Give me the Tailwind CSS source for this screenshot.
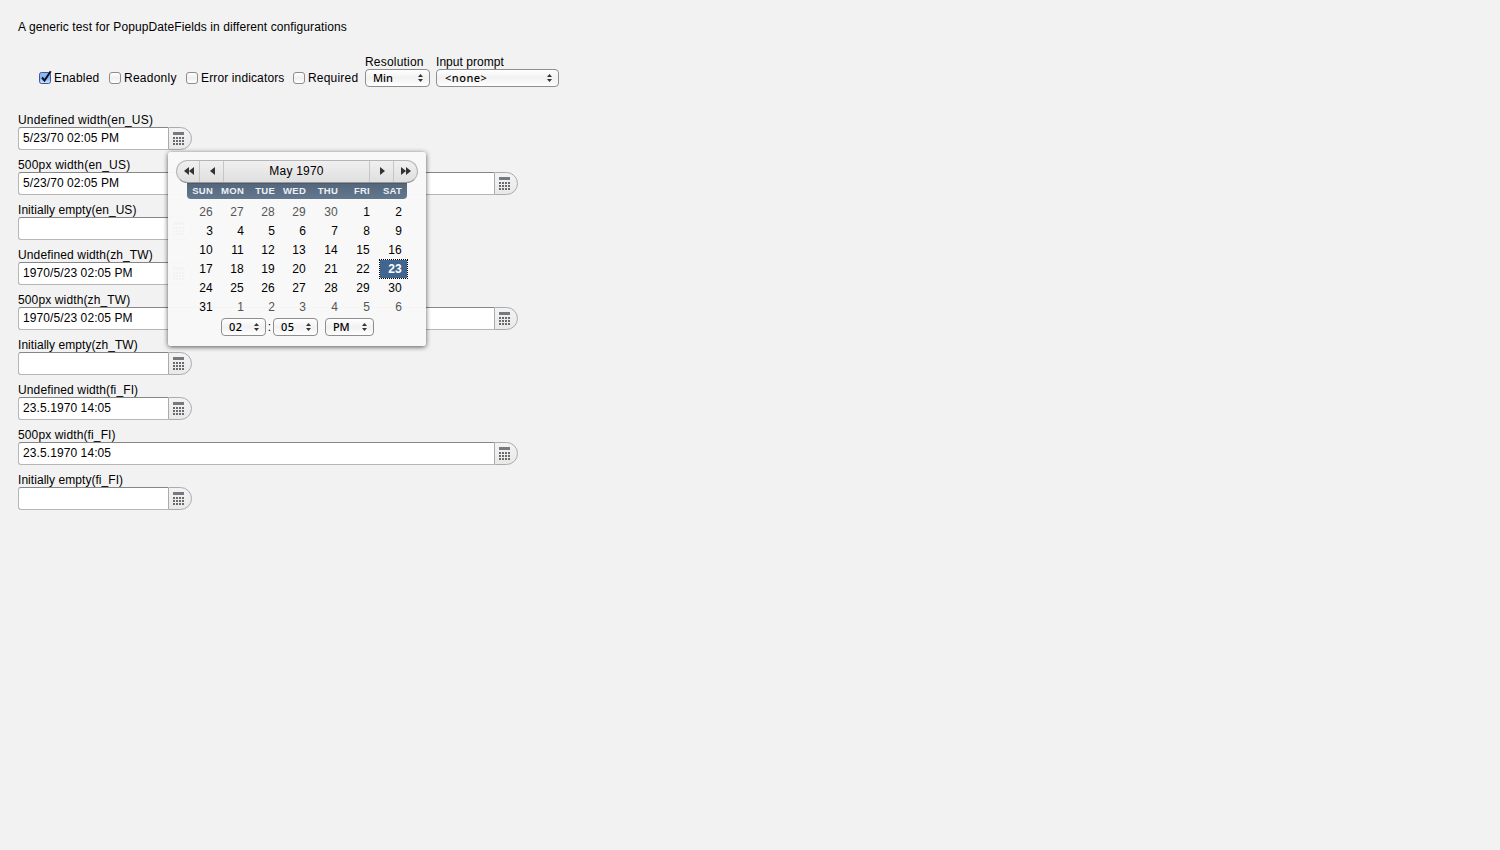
<!DOCTYPE html>
<html lang="en">
<head>
<meta charset="utf-8">
<title>PopupDateFields</title>
<script src="https://cdn.jsdelivr.net/npm/@tailwindcss/browser@4"></script>
</head>
<body class="bg-[#f2f2f2] h-[850px] overflow-hidden text-black text-[12px] leading-[15px] font-['Liberation_Sans',Arial,sans-serif]">
<svg class="hidden">
  <symbol id="cal" viewBox="0 0 11 13"><path fill="#747a80" d="M0 0h11v3H0z"/><path fill="#6a6a6a" d="M0 5h2v2H0zM3 5h2v2H3zM6 5h2v2H6zM9 5h2v2H9zM0 8h2v2H0zM3 8h2v2H3zM6 8h2v2H6zM9 8h2v2H9zM0 11h2v2H0zM3 11h2v2H3zM6 11h2v2H6zM9 11h2v2H9z"/></symbol>
  <symbol id="ud" viewBox="0 0 5 8"><path fill="#333" d="M2.5 0L5 3H0zM2.5 8L5 5H0z"/></symbol>
</svg>
<main class="relative px-[18px] pt-[20px]">
  <p id="title" class="h-[15px] whitespace-nowrap tracking-[0.1px]">A generic test for PopupDateFields in different configurations</p>
  <div class="mt-[19px] ml-[21px] h-[33px] flex items-end whitespace-nowrap">
    <label class="w-[70px] flex items-center gap-[3px] pb-px"><svg class="w-[12px] h-[15px] shrink-0 overflow-visible -translate-y-px" viewBox="0 0 12 15"><defs><linearGradient id="b" x2="0" y2="1"><stop stop-color="#8fbcf0"/><stop offset=".5" stop-color="#83b5ee"/><stop offset="1" stop-color="#c8ecff"/></linearGradient></defs><rect x=".5" y="2.5" width="11" height="11" rx="2" fill="url(#b)" stroke="#47509b"/><path d="M3 7.5l2.500 3L11.700 1.200" fill="none" stroke="#0c1224" stroke-width="2"/></svg><span class="tracking-[0.2px]">Enabled</span></label>
    <label class="w-[77px] flex items-center gap-[3px] pb-px"><i class="w-[12px] h-[12px] mb-[2px] rounded-[3px] border border-[#8d8d8d] bg-linear-to-b from-white via-[#efefef] to-white"></i><span class="tracking-[0.25px]">Readonly</span></label>
    <label class="w-[107px] flex items-center gap-[3px] pb-px"><i class="w-[12px] h-[12px] mb-[2px] rounded-[3px] border border-[#8d8d8d] bg-linear-to-b from-white via-[#efefef] to-white"></i><span class="tracking-[0.13px]">Error indicators</span></label>
    <label class="w-[72px] flex items-center gap-[3px] pb-px"><i class="w-[12px] h-[12px] mb-[2px] rounded-[3px] border border-[#8d8d8d] bg-linear-to-b from-white via-[#efefef] to-white"></i><span class="tracking-[0.2px]">Required</span></label>
    <div class="w-[71px]"><div class="h-[14px] leading-[14px] tracking-[0.2px]">Resolution</div>
      <div class="w-[65px] h-[18px] flex items-center justify-between pl-[7px] pr-[6px] rounded-[4px] border border-[#8e8e8e] bg-linear-to-b from-white via-[#f1f1f1] to-white text-[11px] leading-[14px] font-medium font-['Noto_Sans',sans-serif]"><span>Min</span><svg class="w-[5px] h-[8px]"><use href="#ud"/></svg></div></div>
    <div><div class="h-[14px] leading-[14px] tracking-[0.05px]">Input prompt</div>
      <div class="w-[123px] h-[18px] flex items-center justify-between pl-[8px] pr-[6px] rounded-[4px] border border-[#8e8e8e] bg-linear-to-b from-white via-[#f1f1f1] to-white text-[11px] leading-[14px] font-medium font-['Noto_Sans',sans-serif]"><span class="tracking-[0.5px]">&lt;none&gt;</span><svg class="w-[5px] h-[8px]"><use href="#ud"/></svg></div></div>
  </div>
  <div id="fields" class="mt-[25px] flex flex-col"></div>

  <section class="absolute left-[168px] top-[152px] w-[258px] h-[194px] pt-[8px] rounded-[3px] bg-[#f8f8f8]/97 shadow-[0_1px_5px_rgba(0,0,0,0.65)]">
    <div class="ml-[8px] w-[242px] h-[23px] flex rounded-full border border-[#b5b5b5] border-b-[#999] bg-linear-to-b from-[#f0f0f0] to-[#dfdfdf] overflow-hidden">
      <div class="w-[23px] border-r border-[#c6c6c6] flex items-center justify-center"><svg class="w-[10px] h-[8px] ml-px -mt-px" viewBox="0 0 10 8"><path fill="#333" d="M5 0v8L0 4zM10 0v8L5 4z"/></svg></div>
      <div class="w-[24px] border-r border-[#c6c6c6] flex items-center justify-center"><svg class="w-[5px] h-[8px] ml-[2px] -mt-px" viewBox="0 0 5 8"><path fill="#333" d="M5 0v8L0 4z"/></svg></div>
      <div class="flex-1 text-center leading-[20px] tracking-[0.2px]">May 1970</div>
      <div class="w-[24px] border-l border-[#c6c6c6] flex items-center justify-center"><svg class="w-[5px] h-[8px] ml-[2px] -mt-px" viewBox="0 0 5 8"><path fill="#333" d="M0 0v8L5 4z"/></svg></div>
      <div class="w-[24px] border-l border-[#c6c6c6] flex items-center justify-center"><svg class="w-[10px] h-[8px] -mt-px" viewBox="0 0 10 8"><path fill="#333" d="M0 0v8L5 4zM5 0v8L10 4z"/></svg></div>
    </div>
    <div class="ml-[19px] w-[220px] h-[16px] grid grid-cols-[31px_31px_31px_31px_32px_32px_32px] rounded-b-[4px] bg-linear-to-b from-[#54677c] to-[#63788f] border-t border-[#4a5a6b] text-[#eef1f4] font-bold text-[9.500px] tracking-[0.25px] leading-[14px] text-right">
      <span class="pr-[5px]">SUN</span><span class="pr-[5px]">MON</span><span class="pr-[5px]">TUE</span><span class="pr-[5px]">WED</span><span class="pr-[5px]">THU</span><span class="pr-[5px]">FRI</span><span class="pr-[5px]">SAT</span>
    </div>
    <div id="days" class="ml-[19px] mt-[3px] w-[220px] grid grid-cols-[31px_31px_31px_31px_32px_32px_32px] auto-rows-[19px] leading-[20px] tracking-[0.2px] text-right"></div>
    <div class="ml-[53px] mt-[2px] flex items-center text-[11px] leading-[14px] font-medium font-['Noto_Sans',sans-serif]">
      <div class="w-[45px] h-[18px] flex items-center justify-between pl-[7px] pr-[6px] rounded-[4px] border border-[#8e8e8e] bg-linear-to-b from-white via-[#f1f1f1] to-white"><span class="tracking-[0.4px]">02</span><svg class="w-[5px] h-[8px]"><use href="#ud"/></svg></div>
      <span class="w-[7px] text-center text-[12px] font-['Liberation_Sans',sans-serif]">:</span>
      <div class="w-[45px] h-[18px] flex items-center justify-between pl-[7px] pr-[6px] rounded-[4px] border border-[#8e8e8e] bg-linear-to-b from-white via-[#f1f1f1] to-white"><span class="tracking-[0.4px]">05</span><svg class="w-[5px] h-[8px]"><use href="#ud"/></svg></div>
      <div class="ml-[7px] w-[49px] h-[18px] flex items-center justify-between pl-[7px] pr-[6px] rounded-[4px] border border-[#8e8e8e] bg-linear-to-b from-white via-[#f1f1f1] to-white"><span class="tracking-[-0.2px]">PM</span><svg class="w-[5px] h-[8px]"><use href="#ud"/></svg></div>
    </div>
  </section>
</main>
<script>
const groups = [['en_US', '5/23/70 02:05 PM'], ['zh_TW', '1970/5/23 02:05 PM'], ['fi_FI', '23.5.1970 14:05']];
let html = '';
for (const [loc, val] of groups) {
  const track = loc === 'en_US' ? 'tracking-[0.2px]' : 'tracking-[0.13px]';
  for (const [name, text, width] of [['Undefined width', val, 'w-[174px]'], ['500px width', val, 'w-[500px]'], ['Initially empty', '', 'w-[174px]']]) {
    const labelTrack = text ? track : 'tracking-[0.05px]';
    html += `<div class="h-[45px] whitespace-nowrap"><div class="h-[15px] leading-[17px] ${labelTrack}">${name}(${loc})</div>
      <div class="${width} h-[23px] flex">
        <div class="flex-1 bg-white border border-r-0 border-[#b6b6b6] border-t-[#868686] rounded-l-[3px] pl-[4px] leading-[20px] tracking-[0.09px]">${text}</div>
        <div class="w-[24px] border border-[#ababab] rounded-r-[12px] bg-linear-to-b from-[#f3f3f3] to-[#e9e9e9] pl-[4px] pt-[4px]"><svg class="w-[11px] h-[13px]"><use href="#cal"/></svg></div>
      </div></div>`;
  }
}
document.getElementById('fields').innerHTML = html;
let days = '';
for (let i = 0; i < 42; i++) {
  const n = i < 5 ? 26 + i : i < 36 ? i - 4 : i - 35;
  const cls = (i < 5 || i > 35) ? 'pr-[5px] text-[#555]' : n === 23 ? 'pr-[5px] w-[29px] justify-self-end translate-x-px h-[20px] border border-dotted border-black bg-clip-padding bg-[#40658f] text-white font-bold leading-[18px]' : 'pr-[5px]';
  days += `<span class="${cls}">${n}</span>`;
}
document.getElementById('days').innerHTML = days;
</script>
</body>
</html>
